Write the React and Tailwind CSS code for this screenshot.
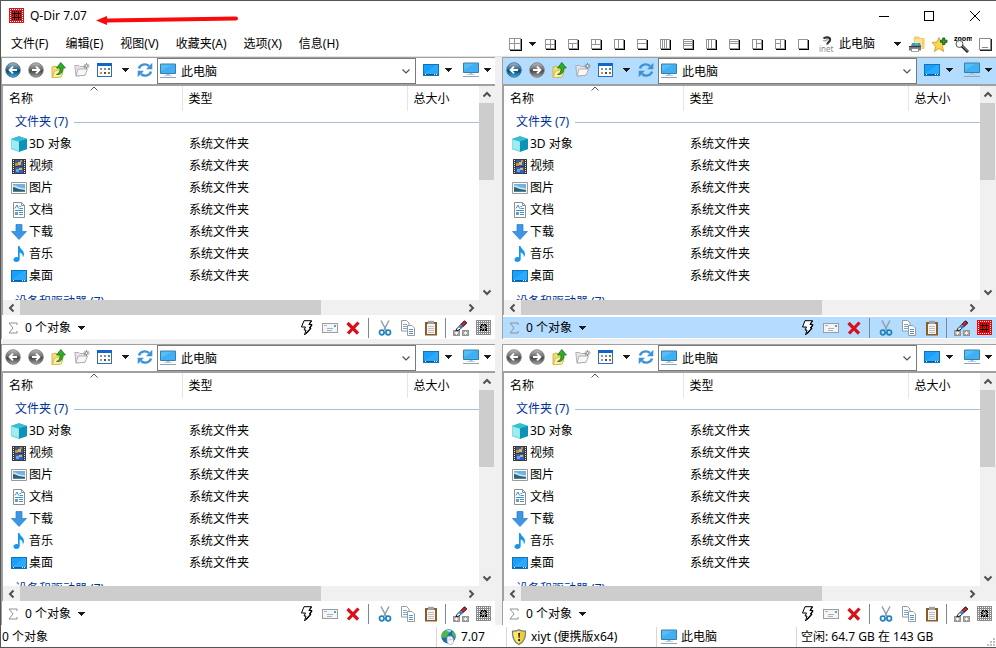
import React from 'react';

const ICON = 'block h-4 w-4 shrink-0';

function Caret() {
  return (
    <svg viewBox="0 0 8 4" className="block h-1 w-2 shrink-0" shapeRendering="crispEdges" aria-hidden="true">
      <path d="M0 0h8L4 4z" fill="#1b1b1b" />
    </svg>
  );
}

function Chevron({ turn = 'down', thin = false }) {
  const paths = {
    up: 'M1.5 6.5L5 3l3.5 3.5',
    down: 'M1.5 3.5L5 7l3.5-3.5',
    left: 'M6.5 1.5L3 5l3.5 3.5',
    right: 'M3.5 1.5L7 5 3.5 8.5',
  };
  return (
    <svg viewBox="0 0 10 10" className="block h-[10px] w-[10px] shrink-0" aria-hidden="true">
      <path d={paths[turn]} fill="none" stroke="#505050" strokeWidth={thin ? 1.2 : 2} />
    </svg>
  );
}

function QDirIcon({ color = '#8a8a8a', dense = false }) {
  const dots = [];
  for (let y = 0; y < 7; y++) {
    for (let x = 0; x < 7; x++) {
      const ring = Math.min(x, y, 6 - x, 6 - y);
      let fill = '#000';
      if (ring === 0) fill = '#fff';
      else if (ring === 1) fill = dense ? '#000' : '#fff';
      else if (ring === 3) fill = dense ? '#000' : '#ddd';
      dots.push(<rect key={`${x}-${y}`} x={1 + x * 2} y={1 + y * 2} width="1" height="1" fill={fill} />);
    }
  }
  return (
    <svg viewBox="0 0 15 15" className="block h-[15px] w-[15px] shrink-0" shapeRendering="crispEdges" aria-hidden="true">
      <path d="M0 0h15v15H0z" fill={color} />
      {dense
        ? <path d="M3 5.500h9M3 9.500h9M5.500 3v9M9.500 3v9" stroke="#000" />
        : <path d="M4.500 4.500h6v6h-6z" fill="none" stroke="#000" strokeDasharray="2 1" />}
      {dots}
    </svg>
  );
}

function RoundArrow({ blue, flip }) {
  const id = `${blue ? 'blue' : 'grey'}${flip ? 'F' : 'B'}`;
  return (
    <svg viewBox="0 0 16 16" className={ICON} aria-hidden="true">
      <defs>
        <linearGradient id={id} x1="0" y1="0" x2="0" y2="1">
          <stop offset="0" stopColor={blue ? '#a9b9c6' : '#bdbdbd'} />
          <stop offset=".45" stopColor={blue ? '#31688f' : '#6c6c6c'} />
          <stop offset=".55" stopColor={blue ? '#0b4674' : '#444'} />
          <stop offset="1" stopColor={blue ? '#36b5e8' : '#a5a5a5'} />
        </linearGradient>
      </defs>
      <circle cx="8" cy="8" r="7.3" fill={`url(#${id})`} stroke={blue ? '#4b6a80' : '#777'} strokeWidth=".8" />
      <path
        d="M12 8H5M8 4.6L4.6 8 8 11.4"
        transform={flip ? 'matrix(-1 0 0 1 16 0)' : undefined}
        fill="none" stroke="#fff" strokeWidth="1.9"
      />
    </svg>
  );
}

function FolderUp() {
  return (
    <svg viewBox="0 0 16 16" className={ICON} aria-hidden="true">
      <path d="M1 5l4-1 1 1.500 5-1V13l-2 2-8 .8z" fill="#f4dc7c" stroke="#cba52f" strokeWidth=".8" />
      <path d="M3.500 9l9-2-2.200 8-9 .8z" fill="#fdf0a9" stroke="#d0ab35" strokeWidth=".7" />
      <path d="M5.500 12.500c3-1 3.700-3.500 3.600-6.500H5.500L9.800.5 14.400 6h-2.600c.2 4-1.500 7-6.300 6.500z" fill="#2fae2b" stroke="#127414" strokeWidth=".8" />
    </svg>
  );
}

function FolderNew() {
  return (
    <svg viewBox="0 0 16 16" className={ICON} aria-hidden="true">
      <path d="M.8 3.500h4l1 1H11V13l-9 1z" fill="#e6e6e6" stroke="#a2a2a2" strokeWidth=".8" />
      <path d="M4 7h9.500L11 13.300l-9 .7z" fill="#f7f7f7" stroke="#a2a2a2" strokeWidth=".8" />
      <path d="M12.500 1v6M9.500 4h6M10.400 1.900l4.200 4.200M14.600 1.900l-4.200 4.200" stroke="#6f6f6f" strokeWidth=".8" />
      <circle cx="12.500" cy="4" r="1.200" fill="#fff" stroke="#777" strokeWidth=".5" />
    </svg>
  );
}

function ViewIcon() {
  return (
    <svg viewBox="0 0 16 16" className={ICON} shapeRendering="crispEdges" aria-hidden="true">
      <path d="M.5 1.500h14v13H.5z" fill="#fff" stroke="#2a6fbf" />
      <path d="M0 1h15v3H0z" fill="#1565c8" />
      <path d="M3 6h2v2H3z" fill="#8a93a3" /><path d="M7 6h2v2H7z" fill="#6d93b7" /><path d="M11 6h2v2h-2z" fill="#3d9a57" />
      <path d="M3 10h2v2H3z" fill="#e08a2c" /><path d="M7 10h2v2H7z" fill="#20549c" /><path d="M11 10h2v2h-2z" fill="#b5651d" />
    </svg>
  );
}

function Refresh() {
  return (
    <svg viewBox="0 0 16 16" className={ICON} aria-hidden="true">
      <path d="M2 6.500C3 2.500 8.500 1 12 4M14 9.500C13 13.500 7.500 15 4 12" fill="none" stroke="#3e92d6" strokeWidth="2.400" />
      <path d="M15.300.8v6.400H9zM.7 15.200V8.800H7z" fill="#3e92d6" />
    </svg>
  );
}

function Computer() {
  return (
    <svg viewBox="0 0 16 16" className={ICON} aria-hidden="true">
      <path d="M.5 1h15v9.500H.5z" fill="#55bdf8" stroke="#3a7ea8" />
      <path d="M1 10V8L12 1.500h3V10z" fill="#2ba4ef" opacity=".5" />
      <path d="M6.500 11h3v1.500h-3z" fill="#a9bcc9" />
      <path d="M0 14.500h16" stroke="#8ba6b8" />
      <path d="M4 12.500h8" stroke="#b4c5d1" strokeWidth=".8" />
    </svg>
  );
}

function Desktop() {
  return (
    <svg viewBox="0 0 16 16" className={ICON} shapeRendering="crispEdges" aria-hidden="true">
      <path d="M.5 2.500h15v11H.5z" fill="#18a0fb" stroke="#1274b8" />
      <path d="M1 12L13 3h2v9z" fill="#3eb2ff" opacity=".5" />
      <path d="M1 12.500h14" stroke="#0b5c9c" />
      <path d="M2 12.500h1M11 12.500h1M13 12.500h1" stroke="#fff" />
    </svg>
  );
}

function Cube() {
  return (
    <svg viewBox="0 0 16 16" className={ICON} aria-hidden="true">
      <path d="M0 3l8-2.700L16 3v10l-8 2.700L0 13z" fill="#12a4c4" />
      <path d="M0 3l8-2.700L16 3 8 5.500z" fill="#35bfd4" />
      <path d="M0 3l8 2.500v10.200L0 13z" fill="#7fe3ea" />
      <path d="M8 5.500L16 3v10l-8 2.700z" fill="#0d93b8" />
      <path d="M1 4l6.500 2v8L1 12z" fill="#c7f3f3" opacity=".5" />
    </svg>
  );
}

function Film() {
  return (
    <svg viewBox="0 0 16 16" className={ICON} shapeRendering="crispEdges" aria-hidden="true">
      <path d="M1 1h14v15H1z" fill="#3a3a3a" />
      <path d="M4 2h8v6H4z" fill="#345fa8" /><path d="M4 9h8v6H4z" fill="#2c5fc2" />
      <path d="M4 5h3v3H4zM9 2h2v2H9z" fill="#d08b34" /><path d="M7 4h3v3H7z" fill="#e4bb50" />
      <path d="M5 11h3v3H5z" fill="#67a5ee" /><path d="M8 10h3v2H8z" fill="#e0b54e" />
      <path d="M2.500 2v14M13.500 2v14" stroke="#e8e8e8" strokeDasharray="1 1" />
    </svg>
  );
}

function Picture() {
  return (
    <svg viewBox="0 0 16 16" className={ICON} aria-hidden="true">
      <path d="M.5 2.500h15v11H.5z" fill="#fff" stroke="#9a9a9a" />
      <path d="M2 4h12v8H2z" fill="#6db3e6" />
      <path d="M2 6c2-1 3 0 5 1s4 .5 7 1.500V11H2z" fill="#cde7f5" />
      <path d="M2 7c2 0 4 1.500 6 2s4 .5 6 1v2H2z" fill="#31646a" />
      <path d="M2 11h12v1H2z" fill="#4b85a8" />
    </svg>
  );
}

function Doc() {
  return (
    <svg viewBox="0 0 16 16" className={ICON} aria-hidden="true">
      <path d="M2.500.5h8l3 3v12h-11z" fill="#fff" stroke="#8e8e8e" />
      <path d="M10.500.5v3h3" fill="none" stroke="#8e8e8e" />
      <path d="M4 6.500L6 3l1.500 3.500M8.500 4.500H10M8.500 6.500h3.500M4 8.500h8M8 10.500h4M8 12.500h4" fill="none" stroke="#3d92cf" />
      <path d="M4 10h3v3H4z" fill="#6a9db8" />
    </svg>
  );
}

function Download() {
  return (
    <svg viewBox="0 0 16 16" className={ICON} aria-hidden="true">
      <path d="M5 .5h6v7h4.500L8 15.500.5 7.500H5z" fill="#3b97e3" stroke="#2c7cc2" strokeWidth=".7" />
    </svg>
  );
}

function Music() {
  return (
    <svg viewBox="0 0 16 16" className={ICON} aria-hidden="true">
      <path d="M7 0h1.500c.3 3 4.500 4 4.500 8 0 1.500-.6 2.600-1.300 3.500.6-3-1-4.500-3-5v6.500c0 1.800-1.600 3-3.400 3S2.500 15 2.500 13.500 4 11 5.500 11c.6 0 1.100.1 1.500.4z" fill="#1597f0" />
    </svg>
  );
}

function Bolt() {
  return (
    <svg viewBox="0 0 16 16" className={ICON} aria-hidden="true">
      <path d="M5 .7h7.500L10 4.500h3L10.500 8H12l-6.500 7L7 10H5l1.500-3h-4z" fill="#fff" stroke="#000" strokeWidth="1" />
      <path d="M12.500 1L10 4.500M13 5l-2.500 3M12 8l-5 5.500" stroke="#000" strokeWidth="1.200" />
    </svg>
  );
}

function Envelope() {
  return (
    <svg viewBox="0 0 16 16" className={ICON} shapeRendering="crispEdges" aria-hidden="true">
      <path d="M.5 3.500h15v9H.5z" fill="#f5f5f5" stroke="#9d9d9d" />
      <path d="M12 5h2v2h-2z" fill="#4ca0df" />
      <path d="M2 5.500h3M5 8.500h6M5 10.500h5" stroke="#aab4bd" />
    </svg>
  );
}

function RedCross() {
  return (
    <svg viewBox="0 0 16 16" className={ICON} aria-hidden="true">
      <path d="M2.500 3L13 13.500M13.500 2.500L3 13.500" stroke="#d9101c" strokeWidth="3.200" />
    </svg>
  );
}

function Scissors() {
  return (
    <svg viewBox="0 0 16 16" className={ICON} aria-hidden="true">
      <path d="M4 .5l5.300 10M12 .5L6.700 10.500" stroke="#8da0ad" strokeWidth="1.500" />
      <circle cx="4.800" cy="12.500" r="2.300" fill="none" stroke="#1e82bd" strokeWidth="1.700" />
      <circle cx="11.200" cy="12.500" r="2.300" fill="none" stroke="#1e82bd" strokeWidth="1.700" />
    </svg>
  );
}

function Copy() {
  return (
    <svg viewBox="0 0 16 16" className={ICON} aria-hidden="true">
      <path d="M1.500.5h5l2.500 2.500v8H1.500z" fill="#fff" stroke="#9a9a9a" />
      <path d="M3 4.500h4M3 6.500h4M3 8.500h4" stroke="#76a9d6" />
      <path d="M7.500 5.500h4.500l2.500 2.500v7.500h-7z" fill="#fff" stroke="#9a9a9a" />
      <path d="M9 9.500h4M9 11.500h4M9 13.500h4" stroke="#4d95d6" />
    </svg>
  );
}

function Clipboard() {
  return (
    <svg viewBox="0 0 16 16" className={ICON} aria-hidden="true">
      <path d="M2 2h12v13.500H2z" fill="#8e5b28" />
      <path d="M4 4h8v10H4z" fill="#f6f6f6" />
      <path d="M5 .8h6V4H5z" fill="#a1a1a1" />
      <path d="M5 6.500h6M5 8.500h6M5 10.500h6M5 12.500h6" stroke="#b0b0b0" strokeWidth=".8" />
    </svg>
  );
}

function PenMask() {
  return (
    <svg viewBox="0 0 16 16" className={ICON} aria-hidden="true">
      <path d="M0 10h7v6H0zM9 10h7v6H9z" fill="#939393" />
      <path d="M3.500 11v4M1.500 12l4 2M5.500 12l-4 2M12.500 11v4M10.500 12l4 2M14.500 12l-4 2" stroke="#fff" strokeWidth=".8" />
      <path d="M3.500 9L11.500.8l2.300 2.200L6 10l-3 .8z" fill="#fff" stroke="#000" strokeWidth=".9" />
      <path d="M8 4.500L11.500 1l2 2L10 6.400z" fill="#e2202c" stroke="#000" strokeWidth=".6" />
      <path d="M6 7l2-2 1.700 1.700L7.500 9z" fill="#2d7ee0" />
    </svg>
  );
}

const SPLITS = [
  ['四窗格', 'M5 1v8M1 5h8'],
  ['上一下二', 'M1 4.500h8M4.500 5v4'],
  ['上二下一', 'M1 5.500h8M4.500 1v4'],
  ['左右', 'M4.500 1v8'],
  ['上下', 'M1 4.500h8'],
  ['四列', 'M2.500 1v8M4.500 1v8M6.500 1v8'],
  ['四行', 'M1 2.500h8M1 4.500h8M1 6.500h8'],
  ['三列', 'M2.500 1v8M5.500 1v8'],
  ['三行', 'M1 2.500h8M1 4.500h8'],
  ['左一右二', 'M4.500 1v8M5 4.500h4'],
  ['左二右一', 'M5.500 1v8M1 4.500h4'],
  ['单窗格', ''],
];

function SplitIcon({ d }) {
  return (
    <svg viewBox="0 0 11 11" className="block h-[11px] w-[11px]" shapeRendering="crispEdges" aria-hidden="true">
      <path d="M1 1h10v10H1z" fill="#000" />
      <path d="M.5.5h9v9h-9z" fill="#fff" stroke="#949494" />
      <path d={d} fill="none" stroke="#949494" />
    </svg>
  );
}

function LargeSplitIcon() {
  return (
    <svg viewBox="0 0 13 13" className="block h-[13px] w-[13px]" shapeRendering="crispEdges" aria-hidden="true">
      <path d="M1 1h12v12H1z" fill="#000" />
      <path d="M.5.5h11v11H.5z" fill="#fff" stroke="#949494" />
      <path d="M5.500 1v10M1 5.500h10" stroke="#949494" />
    </svg>
  );
}

function InetIcon() {
  return (
    <svg viewBox="0 0 16 16" className={ICON} aria-hidden="true">
      <path d="M4.500 2.500c2-2 7-1.500 6.500 1.500S8 6 8.500 8.500" fill="none" stroke="#333" strokeWidth="2.200" />
      <path d="M4 4.500c2 .8 4 0 4.500-1.500" fill="none" stroke="#9a9a9a" strokeWidth="1.200" />
      <text x="0" y="15.500" fontSize="8" fontFamily="Noto Sans" fill="#8a8a8a">inet</text>
    </svg>
  );
}

function PrintFolder() {
  return (
    <svg viewBox="0 0 16 16" className={ICON} aria-hidden="true">
      <path d="M5 .5h5l1 1.500h4.500v11H5z" fill="#f4cf69" />
      <path d="M6 3h7v10H6z" fill="#ffe394" />
      <path d="M3 7h8l1 3H2z" fill="#3c8fd6" />
      <path d="M6 7h3v2H6z" fill="#65c15a" />
      <path d="M0 10h12v4.500H0z" fill="#77797c" />
      <path d="M0 10h12v1H0z" fill="#3b3d40" />
      <path d="M2.500 12.500h7V15.600h-7z" fill="#fff" stroke="#777" strokeWidth=".7" />
    </svg>
  );
}

function StarAdd() {
  return (
    <svg viewBox="0 0 16 16" className={ICON} aria-hidden="true">
      <path d="M7 1.500l2 4.500 5.500.4-4.200 3.600 1.400 5.500-4.700-3-4.700 3L3.700 10.500 0 6.400 5 6z" fill="#fcd44d" stroke="#c99616" strokeWidth=".8" />
      <path d="M8.500 4.200h2.200V2h2v2.200h2.300v2h-2.300v2.300h-2V6.200H8.500z" fill="#26a52c" stroke="#0b5c10" strokeWidth=".9" />
    </svg>
  );
}

function ZoomIcon() {
  return (
    <svg viewBox="0 0 18 18" className="block h-[18px] w-[18px]" aria-hidden="true">
      <text x="0" y="6" fontSize="7" fontWeight="bold" fontFamily="Noto Sans" fill="#000">zoom</text>
      <circle cx="5.500" cy="9" r="3.500" fill="#f6f6f6" stroke="#555" />
      <path d="M8 11l6 6" stroke="#111" strokeWidth="2.800" />
      <path d="M8.500 11l5.500 5.500" stroke="#ccc" strokeWidth="1" />
    </svg>
  );
}

function TrayIcon() {
  return (
    <svg viewBox="0 0 13 13" className="block h-[13px] w-[13px]" shapeRendering="crispEdges" aria-hidden="true">
      <path d="M1 1h12v12H1z" fill="#222" />
      <path d="M.5.5h11v11H.5z" fill="#fff" stroke="#8c8c8c" />
      <path d="M3 9.500h6" stroke="#888" />
    </svg>
  );
}

function Globe() {
  return (
    <svg viewBox="0 0 16 16" className={ICON} aria-hidden="true">
      <circle cx="7.500" cy="7.500" r="7.200" fill="#1c6bab" />
      <path d="M1.500 3.500c3-3 6-3 7.500-2L7.500 5 5 8.500 1.500 9C.5 6.500.5 5 1.500 3.500zM11 2l3.500 3-.5 4-3-3z" fill="#4db848" />
      <path d="M5 1.500c1.500-1 4-1 5.500 0L9 3.500z" fill="#a7dcf4" />
      <path d="M6 10c-.3-1.800.8-3 2-2.700 2.500-.8 4.500 1.200 4.500 4.200 0 2.500-1 4.200-3.200 4.200S5.700 13 6 10z" fill="#f4f6f8" stroke="#97a8b6" strokeWidth=".7" />
      <path d="M8.500 7.500l.8 3M6.200 11c2 0 4.300-.3 6-1" fill="none" stroke="#a9b6c2" strokeWidth=".6" />
    </svg>
  );
}

function Shield() {
  return (
    <svg viewBox="0 0 16 16" className={ICON} aria-hidden="true">
      <path d="M8 .7c2 1.200 4.300 1.600 6.500 1.500C14.800 8.500 13 13 8 15.500 3 13 1.200 8.500 1.500 2.200 3.700 2.300 6 1.900 8 .7z" fill="#f2cf2f" stroke="#6f7d92" strokeWidth="1.200" />
      <path d="M8 2v12.500C4 12 2.500 8.500 2.500 3.300 4.500 3.300 6.500 3 8 2z" fill="#fdea62" />
      <path d="M7.200 4h1.800l-.4 5h-1zM7.200 10H9v2H7.200z" fill="#222" />
    </svg>
  );
}

function IconButton({ label, children, className = 'w-[23px]' }) {
  return (
    <button type="button" aria-label={label} className={`flex h-full shrink-0 items-center justify-center ${className}`}>
      {children}
    </button>
  );
}

const FOLDERS = [
  ['3D 对象', Cube],
  ['视频', Film],
  ['图片', Picture],
  ['文档', Doc],
  ['下载', Download],
  ['音乐', Music],
  ['桌面', Desktop],
];

function GroupRow({ text, tall }) {
  return (
    <tr className={tall ? 'h-[30px]' : 'h-[22px]'}>
      <td colSpan={3} className="p-0">
        <div className="flex items-center gap-[6px] pl-3 text-[#003399]">
          <span className="whitespace-nowrap">{text}</span>
          <span className="h-px flex-1 bg-[#a9bcdc]" />
        </div>
      </td>
    </tr>
  );
}

function FileTable() {
  return (
    <table className="w-full table-fixed border-collapse text-left">
      <colgroup>
        <col className="w-[179px]" />
        <col className="w-[225px]" />
        <col />
      </colgroup>
      <thead>
        <tr className="h-[25px]">
          <th scope="col" className="relative border-r border-[#e5e5e5] p-0 pl-[6px] font-normal" aria-sort="ascending">
            名称
            <svg viewBox="0 0 8 5" className="absolute left-[87px] top-0 h-[5px] w-2" aria-hidden="true">
              <path d="M.5 4.500L4 1l3.500 3.500" fill="none" stroke="#555" />
            </svg>
          </th>
          <th scope="col" className="border-r border-[#e5e5e5] p-0 pl-[6px] font-normal">类型</th>
          <th scope="col" className="p-0 pl-[6px] font-normal">总大小</th>
        </tr>
      </thead>
      <tbody>
        <GroupRow text="文件夹 (7)" />
        {FOLDERS.map(([name, Icon]) => (
          <tr key={name} className="h-[22px]">
            <td className="p-0 pl-2">
              <div className="flex items-center gap-[2px]"><Icon />{name}</div>
            </td>
            <td className="p-0 pl-[7px]">系统文件夹</td>
            <td />
          </tr>
        ))}
        <GroupRow text="设备和驱动器 (7)" tall />
      </tbody>
    </table>
  );
}

function Pane({ id, active, visited }) {
  const bar = active ? 'bg-[#b3dcff]' : 'bg-white';
  return (
    <section aria-label={`窗格 ${id}`} className="flex min-h-0 min-w-0 flex-col border-t border-[#a0a0a0] bg-white">
      <div className={`flex h-[26px] shrink-0 items-center border-l border-[#a0a0a0] ${bar}`}>
        <div className="flex h-full items-center pb-[2px]">
          <IconButton label="后退" className="w-[22px]"><RoundArrow blue={visited} /></IconButton>
          <IconButton label="前进"><RoundArrow flip /></IconButton>
          <IconButton label="向上"><FolderUp /></IconButton>
          <IconButton label="新建文件夹"><FolderNew /></IconButton>
          <IconButton label="视图" className="w-6"><ViewIcon /></IconButton>
          <IconButton label="视图菜单" className="w-4"><Caret /></IconButton>
          <IconButton label="刷新" className="w-6"><Refresh /></IconButton>
        </div>
        <label className="relative flex h-full min-w-0 flex-1 items-center border border-[#7a7a7a] bg-white pl-[2px] pr-1">
          <Computer />
          <select aria-label="地址" className="h-full min-w-0 flex-1 appearance-none bg-transparent pl-[5px] pt-[2px] outline-none">
            <option>此电脑</option>
          </select>
          <Chevron thin />
        </label>
        <div className="mr-1 flex h-full items-center pb-[2px]">
          <IconButton label="桌面" className="w-[26px] pl-1"><Desktop /></IconButton>
          <IconButton label="桌面菜单" className="w-[11px]"><Caret /></IconButton>
          <IconButton label="此电脑" className="w-[30px] pl-[6px]"><Computer /></IconButton>
          <IconButton label="此电脑菜单" className="w-2"><Caret /></IconButton>
        </div>
      </div>
      <div className="flex min-h-0 flex-1 flex-col border-l-2 border-t-2 border-[#a0a0a0]">
        <div className="flex min-h-0 flex-1">
          <div className="min-w-0 flex-1 overflow-hidden"><FileTable /></div>
          <div className="flex w-4 shrink-0 flex-col bg-[#f0f0f0]">
            <IconButton label="向上滚动" className="max-h-[17px] w-[15px]"><Chevron turn="up" /></IconButton>
            <div className="min-h-0 w-[15px] flex-1"><div className="h-[43%] bg-[#cdcdcd]" /></div>
            <IconButton label="向下滚动" className="max-h-[17px] w-[15px]"><Chevron /></IconButton>
          </div>
        </div>
        <div className="flex h-[15px] shrink-0 bg-[#f0f0f0]">
          <IconButton label="向左滚动" className="w-[17px]"><Chevron turn="left" /></IconButton>
          <div className="min-w-0 flex-1"><div className="h-full w-[68%] bg-[#cdcdcd]" /></div>
          <IconButton label="向右滚动" className="w-[17px]"><Chevron turn="right" /></IconButton>
          <span className="w-4" />
        </div>
      </div>
      <div className="shrink-0 border-l border-[#a0a0a0] pb-px pt-[2px]">
        <div className={`flex h-[21px] items-center ${bar}`}>
          <button type="button" className="flex h-full items-center gap-[6px] pl-[6px]">
            <svg viewBox="0 0 10 12" className="block h-3 w-[10px]" aria-hidden="true">
              <path d="M9 3V1H1l4 5-4 5h8V9" fill="none" stroke="#909090" />
            </svg>
            <span className="pl-px">0 个对象</span>
            <Caret />
          </button>
          <div className="ml-auto mr-px flex h-full items-center">
            <IconButton label="快速运行"><Bolt /></IconButton>
            <IconButton label="属性"><Envelope /></IconButton>
            <IconButton label="删除"><RedCross /></IconButton>
            <span className="mx-1 h-5 w-px bg-[#7d8790]" />
            <IconButton label="剪切"><Scissors /></IconButton>
            <IconButton label="复制"><Copy /></IconButton>
            <IconButton label="粘贴"><Clipboard /></IconButton>
            <span className="mx-[3px] h-5 w-px bg-[#7d8790]" />
            <IconButton label="过滤"><PenMask /></IconButton>
            <IconButton label="选择窗格" className="w-[22px]">
              {active ? <QDirIcon color="#ff0000" dense /> : <QDirIcon />}
            </IconButton>
          </div>
        </div>
      </div>
    </section>
  );
}

const MENUS = ['文件(F)', '编辑(E)', '视图(V)', '收藏夹(A)', '选项(X)', '信息(H)'];

export default function App() {
  return (
    <div className="relative flex h-screen flex-col overflow-hidden border-b border-l border-t border-[#555] bg-white font-['Noto_Sans','Noto_Sans_CJK_SC',sans-serif] text-[12px] leading-4 text-black">
      <header className="flex h-[29px] shrink-0 items-center">
        <div className="ml-2"><QDirIcon color="#d81818" dense /></div>
        <h1 className="ml-[6px]">Q-Dir 7.07</h1>
        <div className="ml-auto flex h-full">
          <IconButton label="最小化" className="w-10">
            <svg viewBox="0 0 10 10" className="h-[10px] w-[10px]" shapeRendering="crispEdges"><path d="M0 5.500h10" stroke="#000" /></svg>
          </IconButton>
          <IconButton label="最大化" className="w-[50px]">
            <svg viewBox="0 0 10 10" className="h-[10px] w-[10px]" shapeRendering="crispEdges"><path d="M.5.5h9v9h-9z" fill="none" stroke="#000" /></svg>
          </IconButton>
          <IconButton label="关闭" className="w-[42px]">
            <svg viewBox="0 0 10 10" className="h-[10px] w-[10px]"><path d="M0 0l10 10M10 0L0 10" stroke="#000" /></svg>
          </IconButton>
        </div>
      </header>
      <svg viewBox="0 0 144 12" className="pointer-events-none absolute left-[95px] top-3 h-3 w-36" aria-hidden="true">
        <path d="M0 7.500L11 3v2.400L140 3.600a2 2 0 0 1 0 4L11 9.500V12z" fill="#fa0a0a" />
      </svg>

      <div className="flex h-[27px] shrink-0 items-center justify-between border-b border-[#e3e3e3] pt-[2px]">
        <nav aria-label="菜单" className="flex gap-[17px] pl-[10px]">
          {MENUS.map((m) => <button key={m} type="button" className="whitespace-nowrap">{m}</button>)}
        </nav>
        <div role="toolbar" aria-label="布局" className="flex h-full items-center">
          <IconButton label="布局" className="w-5"><LargeSplitIcon /></IconButton>
          <IconButton label="布局菜单" className="w-[14px]"><Caret /></IconButton>
          {SPLITS.map(([label, d]) => <IconButton key={label} label={label}><SplitIcon d={d} /></IconButton>)}
          <button type="button" className="flex h-full w-[75px] items-center gap-1 pl-1"><InetIcon />此电脑</button>
          <IconButton label="地址菜单" className="w-[14px]"><Caret /></IconButton>
          <IconButton label="打印文件夹" className="w-[25px]"><PrintFolder /></IconButton>
          <IconButton label="添加收藏" className="w-[22px]"><StarAdd /></IconButton>
          <IconButton label="放大镜" className="w-6"><ZoomIcon /></IconButton>
          <IconButton label="托盘" className="w-[21px]"><TrayIcon /></IconButton>
        </div>
      </div>

      <main className="grid min-h-0 flex-1 grid-cols-2 grid-rows-[282fr_281fr] gap-x-[7px] gap-y-[5px] bg-[#f0f0f0]">
        <Pane id={1} visited />
        <Pane id={2} visited active />
        <Pane id={3} />
        <Pane id={4} />
      </main>

      <footer className="flex h-[22px] shrink-0 items-center pt-px">
        <span className="flex-1 pl-px">0 个对象</span>
        <span className="flex h-5 w-[70px] items-center gap-1 border-l border-[#d7d7d7] pl-1"><Globe />7.07</span>
        <span className="flex h-5 w-[150px] items-center gap-1 border-l border-[#d7d7d7] pl-1"><Shield />xiyt (便携版x64)</span>
        <span className="flex h-5 w-[140px] items-center gap-1 border-l border-[#d7d7d7] pl-1"><Computer />此电脑</span>
        <span className="flex h-5 w-[200px] items-center justify-between border-l border-[#d7d7d7] pl-1">
          空闲: 64.7 GB 在 143 GB
          <svg viewBox="0 0 9 9" className="h-[9px] w-[9px] self-end" shapeRendering="crispEdges" aria-hidden="true">
            <path d="M6 0h2v2H6zM3 3h2v2H3zM6 3h2v2H6zM0 6h2v2H0zM3 6h2v2H3zM6 6h2v2H6z" fill="#bfbfbf" />
          </svg>
        </span>
      </footer>
    </div>
  );
}
